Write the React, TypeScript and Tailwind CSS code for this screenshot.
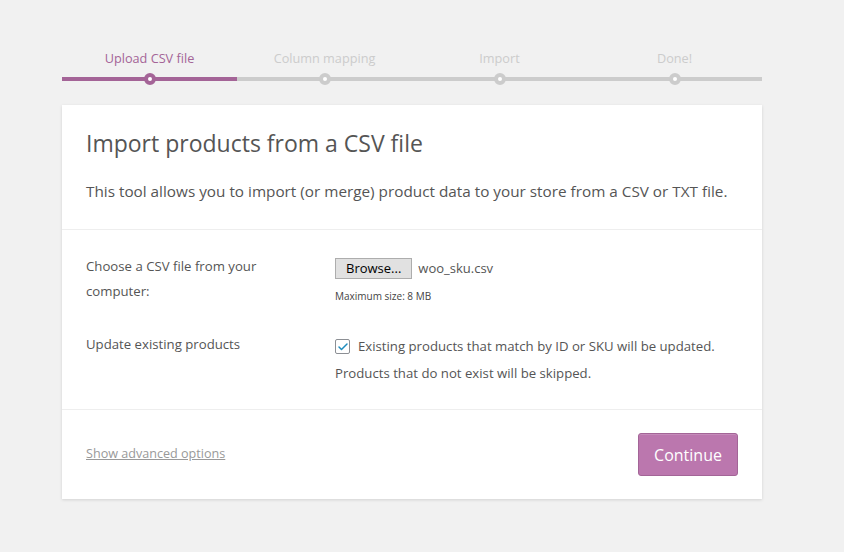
import { Check } from 'lucide-react';

const steps = ['Upload CSV file', 'Column mapping', 'Import', 'Done!'];

export default function App() {
  const active = 0;

  return (
    <div className="min-h-[552px] bg-[#f1f1f1] pt-[46px] font-['Open_Sans',sans-serif] text-[#555]">
      <div className="mx-auto w-[700px] -translate-x-[10px]">
        {/* Steps */}
        <div className="grid grid-cols-4">
          {steps.map((step, i) => {
            const done = i <= active;
            return (
              <div key={step} className="flex flex-col items-center">
                <div className={`text-[12.7px] leading-[24px] ${done ? 'text-[#a46497]' : 'text-[#ccc]'}`}>
                  {step}
                </div>
                <div className="relative mt-[7px] h-[4px] w-full">
                  <div className={`h-full w-full ${done ? 'bg-[#a46497]' : 'bg-[#ccc]'}`} />
                  <div
                    className={`absolute left-1/2 top-1/2 h-[12px] w-[12px] -translate-x-1/2 -translate-y-1/2 rounded-full border-[4px] bg-white ${
                      done ? 'border-[#a46497]' : 'border-[#ccc]'
                    }`}
                  />
                </div>
              </div>
            );
          })}
        </div>

        {/* Card */}
        <div className="mt-[24px] bg-white shadow-[0_1px_3px_rgba(0,0,0,0.13)]">
          <header className="border-b border-[#eee] px-[24px] pt-[22px] pb-[26px]">
            <h2 className="text-[23px] leading-[32px]">Import products from a CSV file</h2>
            <p className="mt-[20px] text-[15.3px] leading-[24px]">
              This tool allows you to import (or merge) product data to your store from a CSV or TXT file.
            </p>
          </header>

          <section className="border-b border-[#eee] px-[24px] pt-[24px] pb-[22px] text-[13.2px]">
            <div className="flex">
              <div className="w-[249px] pr-[40px] leading-[25px]">Choose a CSV file from your computer:</div>
              <div className="pt-[4px]">
                <div className="flex items-center gap-[6px]">
                  <button className="h-[21px] border border-[#adadad] bg-[#e1e1e1] px-[10px] text-[13px] leading-[19px] text-black">
                    Browse...
                  </button>
                  <span className="text-[13px]">woo_sku.csv</span>
                </div>
                <div className="mt-[9px] text-[10px] leading-[16px] text-[#444]">Maximum size: 8 MB</div>
              </div>
            </div>

            <div className="mt-[28px] flex">
              <div className="w-[249px] leading-[25px]">Update existing products</div>
              <div className="pt-[1px] leading-[27px]">
                <div className="flex items-center gap-[8px]">
                  <span className="flex h-[15px] w-[15px] items-center justify-center rounded-[2px] border border-[#8c8f94] bg-white">
                    <Check className="h-[12px] w-[12px] text-[#1e8cbe]" strokeWidth={3} />
                  </span>
                  <span>Existing products that match by ID or SKU will be updated.</span>
                </div>
                <div>Products that do not exist will be skipped.</div>
              </div>
            </div>
          </section>

          <footer className="flex items-center justify-between px-[24px] py-[23px]">
            <a href="#" className="text-[12.6px] text-[#999] underline">
              Show advanced options
            </a>
            <button className="h-[43px] w-[100px] rounded-[3px] border border-[#a36597] bg-[#bb77ae] text-[16px] text-white shadow-[inset_0_1px_0_rgba(255,255,255,0.15)]">
              Continue
            </button>
          </footer>
        </div>
      </div>
    </div>
  );
}
